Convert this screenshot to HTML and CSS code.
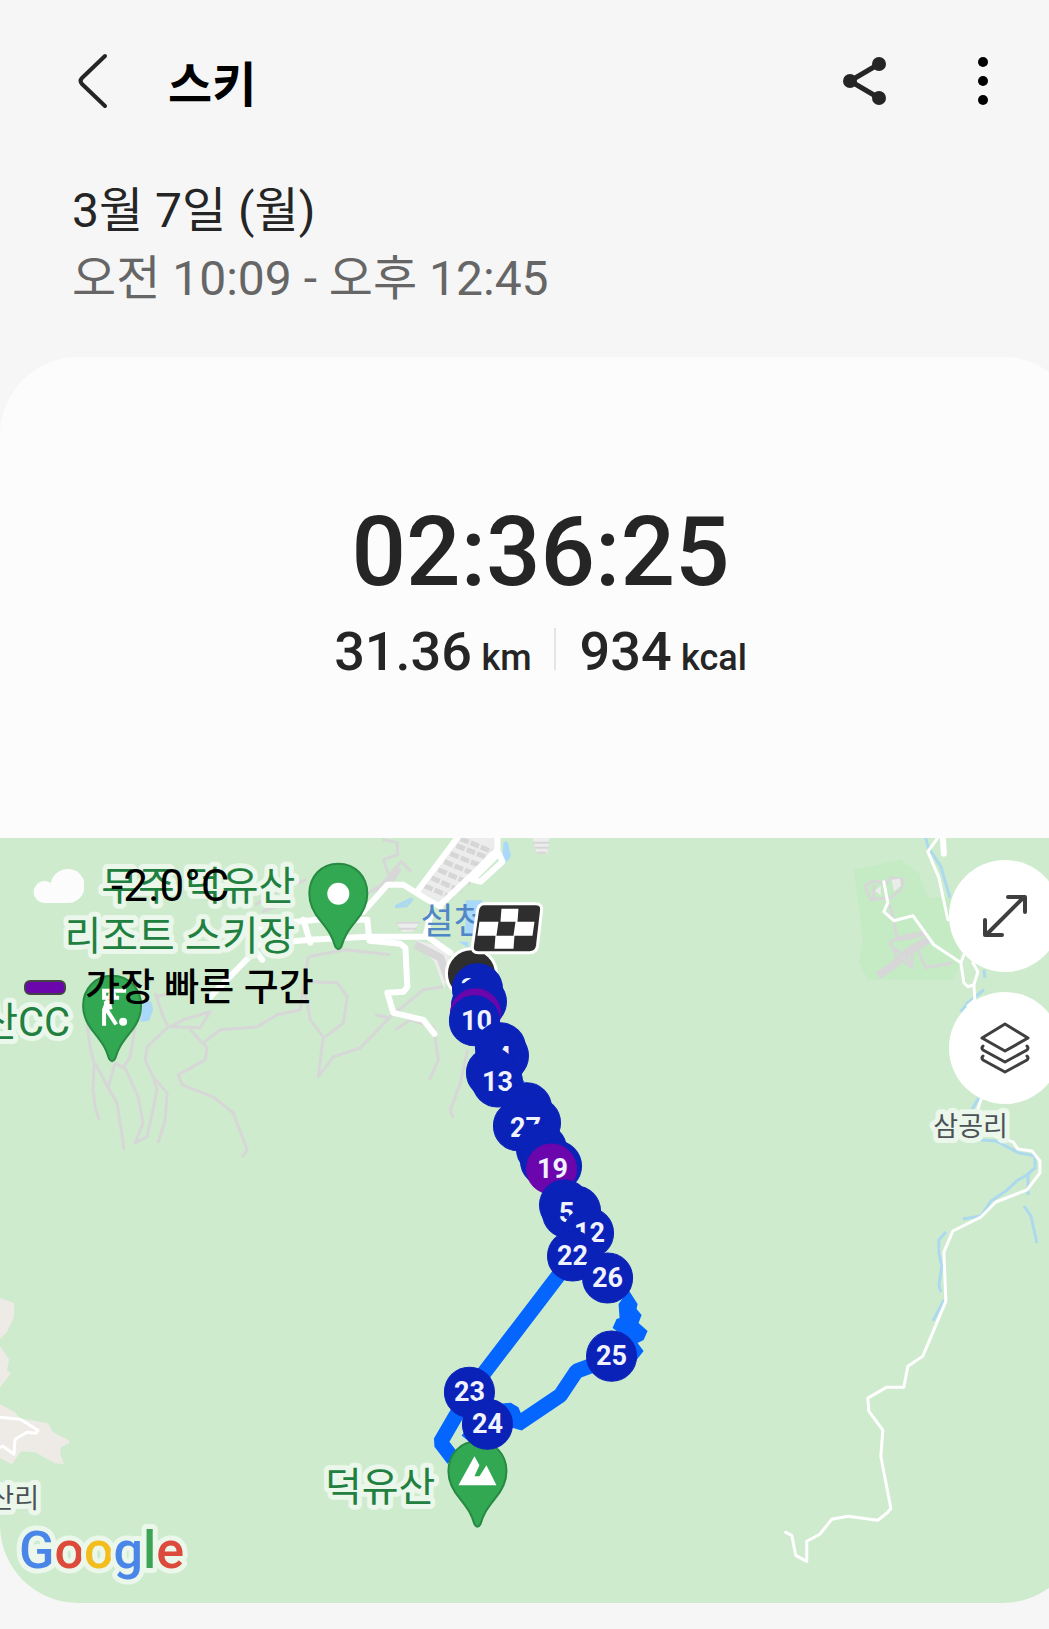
FILE: index.html
```html
<!DOCTYPE html>
<html lang="ko">
<head>
  <meta charset="UTF-8">
  <meta name="viewport" content="width=device-width, initial-scale=1">
  <title>스키</title>
  <link rel="stylesheet" href="styles.css">
</head>
<body>

<div class="screen">
  <header class="topbar">
    <button class="icon-btn" aria-label="뒤로">
      <svg width="32" height="56" viewBox="0 0 32 56"><path d="M29 3 6 25q-3 3 0 6l23 22" fill="none" stroke="#252525" stroke-width="4" stroke-linecap="round"/></svg>
    </button>
    <h1>스키</h1>
    <button class="icon-btn share" aria-label="공유">
      <svg width="46" height="50" viewBox="0 0 46 50">
        <path d="M37 8 8 25l29 17" fill="none" stroke="#252525" stroke-width="5"/>
        <g fill="#252525"><circle cx="37" cy="8" r="7"/><circle cx="8" cy="25" r="7"/><circle cx="37" cy="42" r="7"/></g>
      </svg>
    </button>
    <button class="icon-btn" aria-label="더보기">
      <svg width="12" height="50" viewBox="0 0 12 50"><circle cx="6" cy="6" r="5"/><circle cx="6" cy="25" r="5"/><circle cx="6" cy="44" r="5"/></svg>
    </button>
  </header>

  <div class="when">
    <p class="date">3월 7일 (월)</p>
    <p class="time">오전 10:09 - 오후 12:45</p>
  </div>

  <main class="card">
    <section class="summary">
      <p class="duration">02:36:25</p>
      <div class="stats">
        <p>31.36 <span>km</span></p>
        <p>934 <span>kcal</span></p>
      </div>
    </section>

    <section class="map">
      <svg class="map-canvas" viewBox="0 838 1080 765" preserveAspectRatio="xMidYMid slice">
        <defs>
          <path id="pin" d="M0-30C17-30 29-17 29 0C29 12 24 20 17 28C9 38 6 43 3 53Q0 58-3 53C-6 43-9 38-17 28C-24 20-29 12-29 0C-29-17-17-30 0-30Z"/>
          <circle id="dot" r="25"/>
        </defs>

        <!-- land -->
        <path class="park" d="M853 870 900 860 918 873 927 898 950 897 960 963 953 980 867 980 858 963 862 940Z"/>
        <path class="town" d="M0 1298 14 1303V1317L7 1332 0 1339ZM0 1346 9 1359 7 1370 11 1373 0 1387ZM0 1404 15 1412 20 1418 48 1423 53 1432 69 1440V1443L61 1447 60 1454 64 1464 55 1463 35 1452 21 1451 12 1464 0 1458Z"/>
        <path class="lot" d="M457 838H496V850L442 904 418 892Z"/>
        <g class="lot-rows">
          <path d="M460 839 494 853M456 846 492 860M450 854 485 868M444 862 478 876M438 870 470 884M431 878 462 892M424 886 454 899" stroke-dasharray="9 2"/>
        </g>
        <path class="lot" d="M532 838H549L547 854H536ZM396 922H420L412 932H402ZM415 940 450 950 444 990 434 962Z"/>
        <path class="lot-line" d="M532 843H549M534 848H548M536 853H546M396 923H420M398 929H416"/>

        <!-- trails -->
        <g class="trail">
          <path d="M87 1023 90 1047 94 1063 93 1090 95 1107 99 1120M95 1063 108 1088 117 1103 124 1150M135 1027 130 1057 123 1068 115 1063 108 1088"/>
          <path d="M125 1068 138 1097 143 1123 135 1143 147 1137 157 1090 153 1077 167 1093 165 1120 158 1143M155 993 163 1017 168 1027 147 1047 145 1060 153 1077"/>
          <path d="M155 997 175 993M148 1000 140 1020M170 1027 200 1028 210 1012 183 1020ZM190 1030 207 1048 205 1060 178 1075 182 1085 213 1097 233 1113 247 1150 242 1157"/>
          <path d="M203 1043 220 1030 257 1027 277 1015 300 1010 303 987 308 957M305 993 310 1020 323 1037 318 1077 333 1057 360 1048 390 1017 423 990 443 987"/>
          <path d="M310 982 337 983 347 997 343 1023 325 1037M395 1030 410 1020 433 1027 438 1060 429 1080M375 1015 388 1018M467 1050 460 1083 450 1110 453 1118"/>
          <path d="M382 840 397 843V855L383 860 390 880 368 893M375 892 401 862 411 872M255 905 280 890 306 880M262 912 290 902M308 957 345 950 390 955"/>
        </g>
        <path class="trail wide" d="M415 945 440 958 448 980M385 888 398 868"/>
        <g class="trail">
          <path d="M864 886 872 881 885 884 890 878 903 880 900 890 890 898 870 900ZM873 885V898M889 905 897 940 910 938 927 934M889 942 905 936 926 932M889 942 896 957 911 968V945M894 948 911 964M917 950 925 968 952 963"/>
        </g>
        <path class="trail wide" d="M877 976 892 966 906 953 927 940"/>
        <path class="lot" d="M874 891 880 886V896ZM891 880 899 879 900 886 893 892Z"/>

        <!-- water -->
        <g class="water">
          <path d="M505 842 509 856 503 863M395 907 412 899 406 906ZM467 902H480V934H467Z"/>
          <path d="M925 838 927 847 940 867 949 898M983 990 967 1003 960 1012M978 1098 966 1118M983 970 984 978"/>
          <path d="M980 1140 995 1141 1018 1153 1034 1156V1168L1026 1175 1017 1180 1005 1191 990 1201 980 1216 962 1219M1027 1175V1195M1023 1206 1030 1216 1036 1243M945 1232 938 1240V1253L941 1266 938 1285 940 1292M943 1300 932 1321"/>
        </g>
        <path class="lake" d="M143 1003 151 1002 153 1010 149 1021 140 1022ZM465 902 482 901V934H465ZM458 942H468V948ZM503 842 508 844 509 860 502 862Z"/>

        <!-- roads -->
        <g class="road">
          <path d="M210 997 253 953 257 929 275 924 317 920H367L369 941 400 944 405 948 407 987 403 992 387 993 393 1013 423 1020 434 1034"/>
          <path d="M250 944 262 960M303 920 310 943M255 945 310 940 367 937H427L450 953M363 912 387 885H403L427 900 440 907M418 890 457 838M440 905 475 872 497 850V838M498 853 502 862 480 882 472 880 496 856M425 937 430 915"/>
        </g>
        <g class="road thin">
          <path d="M937 838 927 852 938 878 947 920M883 882 887 903 883 912 893 921 912 916 933 945 960 963 963 983 967 987 973 985 977 972 972 963M960 963 963 955M973 985 974 1000 967 1006M980 1100 975 1115"/>
          <path d="M975 1132 990 1135 1012 1142 1017 1149 1031 1151 1039 1161V1173L1026 1190 995 1202 980 1217 952 1231 943 1252 945 1301 922 1356 907 1366 903 1387H886L867 1398 868 1411 882 1430 880 1456 890 1508 887 1512 877 1520 847 1516 831 1519 819 1534 806 1541V1561L795 1555 791 1535 785 1532"/>
          <path d="M0 1417 20 1419 38 1430 36 1433 27 1432 15 1439 14 1454 3 1446 0 1447"/>
        </g>
        <path class="road" d="M942 838 943 854"/>

        <!-- place names -->
        <g class="place" text-anchor="end">
          <text x="295" y="900">무주 덕유산</text>
          <text x="295" y="950">리조트 스키장</text>
          <text x="70" y="1036">산CC</text>
          <text x="435" y="1501">덕유산</text>
        </g>
        <text class="river" x="420" y="934">설천</text>
        <g class="village" text-anchor="end">
          <text x="1007" y="1136">삼공리</text>
          <text x="39" y="1508">산리</text>
        </g>

        <g class="pin">
          <use href="#pin" x="338" y="894"/>
          <use href="#pin" x="112" y="1006"/>
        </g>
        <circle cx="338" cy="894" r="11" fill="#fff"/>
        <g fill="none" stroke="#fff" stroke-width="4">
          <path d="M124 991H104V998H117M107 1002 104 1010V1024M106 1009 115 1023" stroke-linecap="square"/>
          <path d="M107 1001 109 1010" stroke-width="7"/>
          <circle cx="112" cy="996" r="2"/>
          <circle cx="123" cy="1022" r="2"/>
        </g>

        <!-- track -->
        <path class="track" d="M572 1257 469 1392 440 1442 453 1459M611 1358 576 1371 560 1395 517 1424 511 1410 490 1412 467 1440"/>
        <path class="track-fill" d="M628 1290 637 1304 636 1309 641 1315 638 1323 647 1331 643 1340 637 1343 643 1351 635 1361 605 1345 619 1333 612 1328 616 1319 619 1318 618 1304ZM518 1075 524 1082 520 1090Z"/>

        <g class="pin"><use href="#pin" x="477" y="1471"/></g>
        <path d="M458 1485 474 1456 479 1465 474 1476H479L486 1465 496 1485Z" fill="#fff"/>

        <!-- start and finish -->
        <circle class="flag" cx="471" cy="974" r="25"/>
        <path class="flag" d="M484 904H535Q542 904 541 911L537 946Q536 953 529 953H478Q471 953 472 946L477 911Q478 904 484 904Z"/>
        <path d="M501 909H518L517 922H500ZM479 922H498L496 936H477ZM515 922H534L532 936H513ZM495 936H514L513 949H494Z" fill="#fff"/>

        <g class="lap">
          <use href="#dot" x="477" y="989"/><text x="468" y="998">3</text>
          <use href="#dot" x="476" y="1006"/>
          <use href="#dot" x="481" y="1002"/>
          <use href="#dot" class="fast" x="475" y="1014"/>
          <use href="#dot" x="474" y="1021"/><text x="476" y="1030">10</text>
          <use href="#dot" x="500" y="1048"/>
          <use href="#dot" x="499" y="1062"/>
          <use href="#dot" x="503" y="1056"/><text x="503" y="1066">4</text>
          <use href="#dot" x="491" y="1073"/>
          <use href="#dot" x="497" y="1082"/><text x="497" y="1091">13</text>
          <use href="#dot" x="526" y="1108"/>
          <use href="#dot" x="535" y="1123"/>
          <use href="#dot" x="518" y="1126"/><text x="525" y="1137">27</text>
          <use href="#dot" x="541" y="1149"/><text x="537" y="1158">2</text>
          <use href="#dot" x="545" y="1161"/>
          <use href="#dot" x="556" y="1166"/>
          <use href="#dot" class="fast" x="551" y="1169"/><text x="552" y="1178">19</text>
          <use href="#dot" x="575" y="1211"/>
          <use href="#dot" x="564" y="1205"/>
          <use href="#dot" x="567" y="1213"/><text x="566" y="1222">5</text>
          <use href="#dot" x="588" y="1233"/><text x="589" y="1242">12</text>
          <use href="#dot" x="572" y="1256"/><text x="572" y="1265">22</text>
          <use href="#dot" x="607" y="1278"/><text x="607" y="1287">26</text>
          <use href="#dot" x="611" y="1356"/><text x="611" y="1365">25</text>
          <use href="#dot" x="469" y="1392"/><text x="469" y="1401">23</text>
          <use href="#dot" x="487" y="1424"/><text x="487" y="1433">24</text>
        </g>

        <text class="google" x="19" y="1568"><tspan fill="#4a86e8">G</tspan><tspan fill="#dc4a3b">o</tspan><tspan fill="#f2bd1d">o</tspan><tspan fill="#4a86e8">g</tspan><tspan fill="#3da456">l</tspan><tspan fill="#dc4a3b">e</tspan></text>
      </svg>

      <div class="overlay">
        <p class="weather">
          <svg width="52" height="36" viewBox="0 0 52 36"><path d="M12 35a11 11 0 1 1 7-20A17 17 0 1 1 36 35Z" fill="#fdfcfc"/></svg>
          -2.0°C
        </p>
        <p class="legend"><span class="swatch"></span>가장 빠른 구간</p>
      </div>

      <div class="map-tools">
        <button aria-label="지도 확대">
          <svg width="48" height="48" viewBox="0 0 48 48" fill="none" stroke="#3f3f3f" stroke-width="4" stroke-linecap="round" stroke-linejoin="round"><path d="M5 43 43 5M27 5H44V20M4 28V43H21"/></svg>
        </button>
        <button aria-label="지도 유형">
          <svg width="52" height="52" viewBox="0 0 52 52" fill="none" stroke="#3f3f3f" stroke-width="3" stroke-linecap="round" stroke-linejoin="round"><path d="M26 2 49 16 26 29 3 16ZM4 24Q2 26 4 28L26 40 48 28Q50 26 48 24M4 34Q2 36 4 38L26 50 48 38Q50 36 48 34"/></svg>
        </button>
      </div>
    </section>
  </main>
</div>

</body>
</html>
```

FILE: styles.css
```css
* { box-sizing: border-box; }
body {
  margin: 0;
  background: #f6f6f6;
  color: #252525;
  font-family: Roboto, "Noto Sans CJK KR", sans-serif;
  overflow-x: hidden;
}
h1, p { margin: 0; }
button {
  border: none;
  padding: 0;
  cursor: pointer;
}
svg { display: block; }

/* the right edge of the screen runs past the window */
.screen {
  width: calc(100% + 32px);
  padding-bottom: 26px;
}

.topbar {
  display: flex;
  align-items: center;
  height: 162px;
  padding: 0 92px 0 76px;
}
.topbar h1 {
  flex: 1;
  margin-left: 60px;
  font-size: 48px;
  font-weight: 700;
  color: #000;
}
.icon-btn { background: none; }
.share { margin-right: 89px; }

.when {
  height: 195px;
  padding: 15px 72px 0;
  font-size: 48px;
  line-height: 68px;
}
.time { color: #666; }

.card {
  background: #fcfcfc;
  border-radius: 78px;
  overflow: hidden;
}
.summary {
  height: 481px;
  padding-top: 138px;
  text-align: center;
  font-weight: 500;
}
.duration {
  font-size: 96px;
  line-height: 115px;
}
.stats {
  display: flex;
  justify-content: center;
  font-size: 54px;
  line-height: 84px;
}
.stats p {
  position: relative;
  padding: 0 24px;
}
.stats p + p::before {
  content: "";
  position: absolute;
  left: -2px;
  top: 18px;
  width: 2px;
  height: 42px;
  background: #e4e4e4;
}
.stats span {
  margin-left: -4px;
  font-size: 36px;
}

.map {
  position: relative;
  height: 765px;
  background: #ceebce;
}
.map-canvas {
  width: 100%;
  height: 100%;
}
.park { fill: #c5ebc5; }
.town { fill: #eeebe6; }
.lot { fill: #ececec; }
.lot-rows, .lot-line {
  fill: none;
  stroke: #d6d6d6;
  stroke-width: 5;
}
.lot-line { stroke-width: 2; }
.trail {
  fill: none;
  stroke: #d7d7d8;
  stroke-width: 3;
  stroke-linejoin: round;
}
.trail.wide { stroke-width: 8; }
.water {
  fill: none;
  stroke: #add9ee;
  stroke-width: 3;
}
.lake { fill: #a9d8fa; }
.road {
  fill: none;
  stroke: #fff;
  stroke-width: 6;
  stroke-linecap: round;
  stroke-linejoin: round;
}
.thin { stroke-width: 3; }

.place, .village, .google {
  paint-order: stroke;
  stroke: #eaf7ea;
  stroke-width: 10;
  stroke-linejoin: round;
}
.place {
  fill: #21803f;
  font-size: 40px;
}
.village {
  fill: #4c5156;
  font-size: 27px;
}
.river {
  fill: #4f86c6;
  font-size: 36px;
}
.google {
  font-size: 52px;
  font-weight: 500;
}
.pin {
  fill: #32a852;
  stroke: #278a42;
  stroke-width: 2;
}
.track {
  fill: none;
  stroke: #0565ff;
  stroke-width: 15;
  stroke-linejoin: bevel;
}
.track-fill { fill: #0565ff; }
.flag {
  fill: #2e2e2e;
  stroke: #fff;
  stroke-width: 3;
}
.lap {
  fill: #0b22b9;
  font-size: 27px;
  font-weight: 700;
  text-anchor: middle;
}
.lap use {
  stroke: #0b22b9;
  stroke-width: 1;
}
.lap text { fill: #f0f2ff; }
.lap .fast {
  fill: #6a06ab;
  stroke: #6a06ab;
}

.overlay {
  position: absolute;
  top: 20px;
  left: 24px;
  color: #000;
}
.weather {
  display: flex;
  align-items: center;
  gap: 27px;
  padding-left: 8px;
  font-size: 44px;
  line-height: 56px;
}
.legend {
  display: flex;
  align-items: center;
  gap: 19px;
  margin-top: 45px;
  font-size: 38px;
  font-weight: 500;
  line-height: 56px;
}
.swatch {
  width: 42px;
  height: 15px;
  border: 2px solid #444;
  border-radius: 6px;
  background: #6a06ab;
}
.map-tools {
  position: absolute;
  top: 22px;
  right: 20px;
  display: grid;
  gap: 20px;
}
.map-tools button {
  display: grid;
  place-items: center;
  width: 112px;
  height: 112px;
  border-radius: 50%;
  background: #fff;
}
```
